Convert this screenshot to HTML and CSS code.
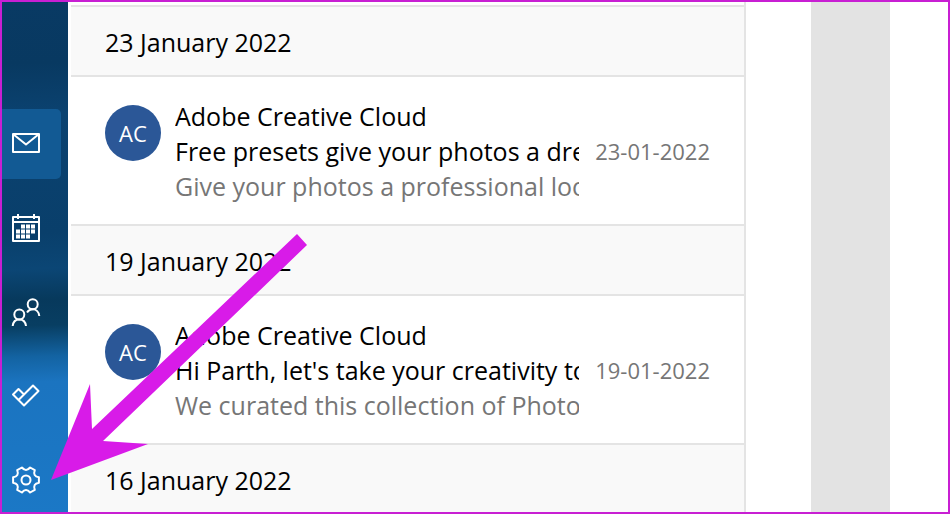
FILE: index.html
```html
<!DOCTYPE html>
<html lang="en">
<head>
    <meta charset="UTF-8">
    <meta name="viewport" content="width=device-width, initial-scale=1.0">
    <title>Mail</title>
    <link rel="stylesheet" href="styles.css">
</head>
<body>
    <div class="app">
        <!-- App switcher -->
        <nav class="sidebar">
            <a class="nav-item active" href="#" aria-label="Mail">
                <svg viewBox="0 0 28 28"><path d="M1 4h26v18H1zM1 4l13 10.500L27 4"/></svg>
            </a>
            <a class="nav-item" href="#" aria-label="Calendar">
                <svg viewBox="0 0 28 28">
                    <path d="M1 3h26v24H1zM1 8h26M6 0v5M22 0v5"/>
                    <path class="solid" d="M9 10.500h4v4H9zM14 10.500h4v4h-4zM19 10.500h4v4h-4zM4 15.500h4v4H4zM9 15.500h4v4H9zM14 15.500h4v4h-4zM19 15.500h4v4h-4zM4 20.500h4v4H4zM9 20.500h4v4H9zM14 20.500h4v4h-4z"/>
                </svg>
            </a>
            <a class="nav-item" href="#" aria-label="People">
                <svg viewBox="0 0 28 28">
                    <circle cx="20.700" cy="6.300" r="5"/>
                    <path d="M15 14.500c1.500-2.300 3.500-3.200 5.700-3.200 3.500 0 6.200 2.700 6.600 6.700"/>
                    <circle cx="7.300" cy="16.500" r="5"/>
                    <path d="M.7 28c.4-4 3.100-6.500 6.600-6.500s6.200 2.500 6.700 6.500"/>
                </svg>
            </a>
            <a class="nav-item" href="#" aria-label="To Do">
                <svg viewBox="0 0 28 28"><path d="M1 12.500L6.500 7l5.500 5.500L21 3.500l5.500 5.500-14.500 14.500zM6.500 18l5.500-5.500"/></svg>
            </a>
            <a class="nav-item" href="#" aria-label="Settings">
                <svg viewBox="0 0 28 28">
                    <path d="M26.900 11.300v5.400Q20.500 17.750 22.800 23.800L18.100 26.500Q14 21.500 9.900 26.500L5.200 23.800Q7.500 17.750 1.100 16.700v-5.400Q7.500 10.250 5.200 4.200L9.900 1.500Q14 6.500 18.100 1.500L22.800 4.200Q20.500 10.250 26.900 11.300z"/>
                    <circle cx="14" cy="14" r="4.500"/>
                </svg>
            </a>
        </nav>

        <!-- Message list -->
        <main class="mail-list">
            <h2 class="date-header">23 January 2022</h2>
            <article class="mail">
                <div class="avatar">AC</div>
                <div class="mail-text">
                    <p>Adobe Creative Cloud</p>
                    <p>Free presets give your photos a dre</p>
                    <p class="preview">Give your photos a professional loo</p>
                </div>
                <time class="mail-date" datetime="2022-01-23">23-01-2022</time>
            </article>

            <h2 class="date-header">19 January 2022</h2>
            <article class="mail">
                <div class="avatar">AC</div>
                <div class="mail-text">
                    <p>Adobe Creative Cloud</p>
                    <p>Hi Parth, let's take your creativity to</p>
                    <p class="preview">We curated this collection of Photo</p>
                </div>
                <time class="mail-date" datetime="2022-01-19">19-01-2022</time>
            </article>

            <h2 class="date-header">16 January 2022</h2>
        </main>

        <!-- Reading pane -->
        <aside class="reading-pane">
            <div class="reading-strip"></div>
        </aside>

        <!-- Arrow to the settings button -->
        <svg class="arrow" viewBox="0 0 256 246">
            <path d="M0 246L39 150l2 45L246 0l10 11L52 207l45 3z"/>
        </svg>
    </div>
</body>
</html>
```
FILE: styles.css
```css
* {
    box-sizing: border-box;
}

body {
    margin: 0;
    font-family: "Open Sans", "Noto Sans", sans-serif;
    font-size: 25px;
    line-height: 35px;
    color: #000;
    background-color: #fff;
}

.app {
    position: relative;
    display: grid;
    grid-template-columns: 66px 1fr 202px;
    height: 100vh;
    overflow: hidden;
    border: 2px solid #c81fd3;
}

/* Sidebar */
.sidebar {
    display: flex;
    flex-direction: column;
    gap: 14px;
    padding: 107px 7px 0 0;
    background: linear-gradient(178deg, #093a64 0%, #083961 12%, #0b4270 22%, #093f6b 45%, #0b4675 52%, #07395c 58%, #083e62 63%, #1363a2 69%, #1b74c0 74%, #1b78c6 100%);
}

.nav-item {
    display: flex;
    align-items: center;
    height: 70px;
    padding-left: 10px;
    border-radius: 0 5px 5px 0;
}

.nav-item.active {
    background-color: #125a94;
}

.nav-item svg {
    width: 28px;
    height: 28px;
    overflow: visible;
    fill: none;
    stroke: #fff;
    stroke-width: 2;
    stroke-linejoin: round;
}

.nav-item .solid {
    fill: #fff;
    stroke: none;
}

/* Message list */
.mail-list {
    min-width: 0;
    padding: 3px 0 0 3px;
    border-right: 2px solid #e4e4e4;
}

.date-header {
    height: 70px;
    margin: 0;
    padding: 18px 34px 0;
    border-top: 2px solid #e4e4e4;
    font-size: 25px;
    font-weight: normal;
    background-color: #f9f9f9;
}

.mail {
    display: flex;
    align-items: center;
    padding: 22px 34px 20px;
    border-top: 2px solid #e4e4e4;
}

.avatar {
    flex: none;
    align-self: flex-start;
    width: 56px;
    margin: 6px 14px 0 0;
    border-radius: 50%;
    font-size: 22px;
    line-height: 56px;
    text-align: center;
    color: #fff;
    background-color: #2b5797;
}

.mail-text {
    flex: 1;
    min-width: 0;
    overflow: hidden;
    white-space: nowrap;
}

.mail-text p {
    margin: 0;
}

.mail-text .preview {
    color: #767676;
}

.mail-date {
    margin-left: 16px;
    font-size: 22px;
    color: #767676;
}

/* Reading pane */
.reading-pane {
    display: flex;
    padding: 0 58px 0 65px;
}

.reading-strip {
    flex: 1;
    background-color: #e3e3e3;
}

/* Arrow */
.arrow {
    position: absolute;
    left: 49px;
    top: 232px;
    width: 256px;
    height: 246px;
    fill: #d81be8;
}
```
